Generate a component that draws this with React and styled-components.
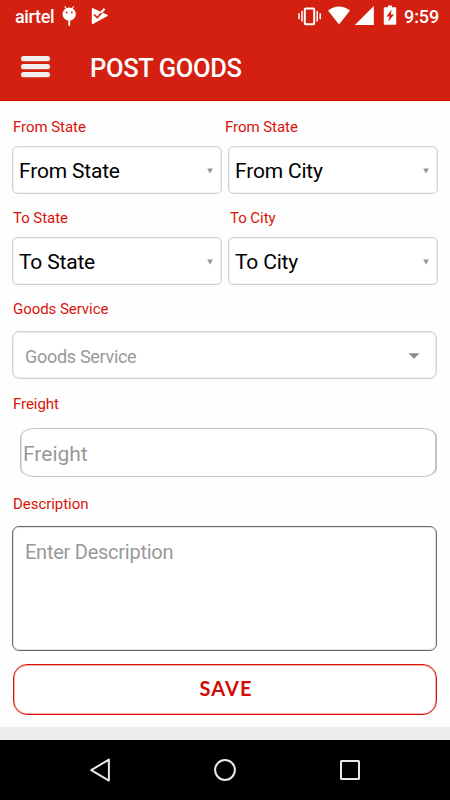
import React from 'react';
import styled, { createGlobalStyle, ThemeProvider } from 'styled-components';

const theme = {
    red: '#d32011',
    textRed: '#d8140a',
    grey: '#999999',
    line: '#d3d3d3',
};

const GlobalStyle = createGlobalStyle`
    * {
        box-sizing: border-box;
    }
    body {
        margin: 0;
        background-color: #fefefe;
        font-family: Roboto, "Liberation Sans", sans-serif;
    }
    svg {
        display: block;
    }
`;

const Screen = styled.div`
    width: 450px;
    height: 800px;
    display: flex;
    flex-direction: column;
    overflow: hidden;
    background-color: #fefefe;
`;

const StatusBar = styled.div`
    display: flex;
    justify-content: space-between;
    flex: none;
    height: 32px;
    padding: 0 10px 0 15px;
    background-color: ${props => props.theme.red};
    color: #fff;
`;

const StatusGroup = styled.div`
    display: flex;
    align-items: flex-start;
`;

const StatusText = styled.span`
    flex: none;
    width: ${props => props.$width};
    font-size: 18px;
    font-weight: 500;
    line-height: 33px;
    white-space: nowrap;
    letter-spacing: ${props => props.$spacing || '0'};
`;

const Toolbar = styled.header`
    display: flex;
    flex: none;
    align-items: center;
    height: 69px;
    padding: 0 21px;
    gap: 40px;
    background-color: ${props => props.theme.red};
    border-bottom: 1px solid #d60f05;
`;

const MenuButton = styled.button`
    display: flex;
    flex-direction: column;
    gap: 3px;
    width: 29px;
    padding: 0;
    border: none;
    background: none;
`;

const MenuBar = styled.span`
    height: 5px;
    border-radius: 2.5px;
    background-color: #f3efef;
    box-shadow: 0 1px 0 rgba(255, 190, 185, 0.3);
`;

const Title = styled.h1`
    margin: 0;
    padding-top: 3px;
    color: #fff;
    font-size: 25.5px;
    font-weight: 500;
    line-height: 30px;
    letter-spacing: -0.35px;
`;

const Form = styled.form`
    display: flex;
    flex-direction: column;
    flex: 1;
    padding: 16px 12px 0;
`;

const Row = styled.div`
    display: grid;
    grid-template-columns: 210px 210px;
    column-gap: 6px;
    margin-bottom: 14px;
`;

const Field = styled.div`
    display: flex;
    flex-direction: column;
    margin-bottom: ${props => props.$bottom || '0'};
`;

const Label = styled.label`
    height: 20px;
    margin-bottom: ${props => props.$bottom || '9px'};
    padding-left: 1px;
    color: ${props => props.theme.textRed};
    font-size: 15px;
    line-height: 20px;
    letter-spacing: -0.05px;
`;

// labels of the second column don't line up with their boxes
const ShiftedLabel = styled(Label)`
    padding-left: 0;
    margin-left: ${props => props.$shift};
`;

const Select = styled.div`
    display: flex;
    align-items: center;
    justify-content: space-between;
    height: 48px;
    padding: 2px 8px 0 6px;
    border: 1px solid ${props => props.theme.line};
    border-radius: 5px;
    background-color: #fff;
    box-shadow: inset 0 0 0 1px #f3f3f3;
    color: #000;
    font-size: 21px;
    letter-spacing: -0.18px;
`;

const WideSelect = styled(Select)`
    width: 425px;
    padding: 2px 16px 0 12px;
    border-radius: 7px;
    box-shadow: inset 0 0 0 1px #ececec;
    color: ${props => props.theme.grey};
    font-size: 18px;
    letter-spacing: -0.3px;
`;

const Input = styled.input`
    height: 49px;
    margin: 0 1px 0 8px;
    padding: 2px 0 0 2px;
    border: 1px solid #c4c4c4;
    border-width: 1px 2px 1px 1px;
    border-radius: 14px / 9px;
    background-color: #fff;
    box-shadow: inset 1px 0 0 #dcdcdc;
    font-family: inherit;
    font-size: 21px;
    outline: none;
    &::placeholder {
        color: ${props => props.theme.grey};
        opacity: 1;
    }
`;

const TextArea = styled.textarea`
    display: block;
    width: 425px;
    height: 125px;
    margin: 0;
    padding: 13px 12px;
    border: 1px solid #686868;
    border-radius: 7px;
    background-color: #fff;
    box-shadow: inset 0 0 0 1px #e2e2e2;
    font-family: inherit;
    font-size: 20px;
    line-height: 25px;
    letter-spacing: -0.25px;
    resize: none;
    outline: none;
    &::placeholder {
        color: ${props => props.theme.grey};
        opacity: 1;
    }
`;

const SaveButton = styled.button`
    width: 424px;
    height: 51px;
    margin: 0 0 0 1px;
    padding: 0 0 3px 2px;
    border: 1px solid #d8140a;
    border-radius: 14px;
    background-color: #fff;
    box-shadow: inset 0 0 0 1px #f3b0ab;
    color: #d00c06;
    font-family: Lato, "Open Sans", sans-serif;
    font-size: 20px;
    font-weight: 700;
    letter-spacing: 1.1px;
`;

const Strip = styled.div`
    flex: none;
    height: 13px;
    background-color: #ececec;
`;

const NavBar = styled.nav`
    display: flex;
    flex: none;
    justify-content: space-between;
    align-items: center;
    height: 60px;
    padding: 0 88px;
    background-color: #000;
`;

const Arrow = () => (
    <svg width="6" height="6" viewBox="0 0 6 6">
        <path d="M0.2 0.5h5.6L3 5.6z" fill="#949494" />
    </svg>
);

const WideArrow = () => (
    <svg width="12" height="6" viewBox="0 0 12 6">
        <path d="M0.5 0.3h11L6 5.8z" fill="#8b8b8b" />
    </svg>
);

const LeftStatusIcons = () => (
    <svg width="54" height="32" viewBox="58 0 54 32" fill="#fff">
        <path d="M64.6 6.3l2.2 3.2M73.8 6.3l-2.2 3.2" stroke="#fff" strokeWidth="1.1" />
        <circle cx="69.2" cy="14.2" r="6.6" />
        <rect x="68.3" y="20" width="1.9" height="6" rx="0.9" />
        <circle cx="66.6" cy="12.4" r="0.95" fill="#d32011" />
        <circle cx="71.8" cy="12.4" r="0.95" fill="#d32011" />
        <path d="M92.6 8q-.8 0-.8.9v14.2q0 1.3 1.2.8L107.5 16q.8-.6-.2-1.2z" />
        <path d="M94 14.5l3.2 3.1 8.6-8.8" fill="none" stroke="#d32011" strokeWidth="1.7" />
        <path d="M100.1 12.2l3.6-4.2 1.6 1.4-3.5 4z" />
    </svg>
);

const RightStatusIcons = () => (
    <svg width="107" height="32" viewBox="297 0 107 32" fill="#fff">
        <rect x="304.8" y="8.4" width="9.4" height="15.8" rx="1" fill="none" stroke="#fff" strokeWidth="2" />
        <path d="M302 11v10.5M317.2 11v10.5M299 13.2v6M320.2 13.2v6" stroke="#fff" strokeWidth="1.5" />
        <path d="M328 10.6Q339 2.4 350 10.6L339 24.6z" />
        <path d="M373.8 6v19h-19z" />
        <path d="M388 7.3V5.5h4v1.8h3.2q1 0 1 1v15.4q0 1-1 1h-10.4q-1 0-1-1V8.3q0-1 1-1z" />
        <path d="M391.8 9.6l-5.4 6.8h3.1l-1.2 5.3 5.7-7.2h-3.2z" fill="#d32011" />
    </svg>
);

const BackIcon = () => (
    <svg width="24" height="26" viewBox="88 757 24 26" fill="none" stroke="#e8e8e8" strokeWidth="2">
        <path d="M108.9 759.6v21L91.2 770.1z" strokeLinejoin="round" />
    </svg>
);

const HomeIcon = () => (
    <svg width="24" height="24" viewBox="213 758 24 24" fill="none" stroke="#e8e8e8" strokeWidth="2">
        <circle cx="225" cy="770" r="9.9" />
    </svg>
);

const RecentIcon = () => (
    <svg width="24" height="24" viewBox="338 758 24 24" fill="none" stroke="#e8e8e8" strokeWidth="2">
        <rect x="341" y="761" width="18" height="18" rx="0.5" />
    </svg>
);

const App = () => (
    <ThemeProvider theme={theme}>
        <GlobalStyle />
        <Screen>
            <StatusBar>
                <StatusGroup>
                    <StatusText $width="43px" $spacing="-0.35px">airtel</StatusText>
                    <LeftStatusIcons />
                </StatusGroup>
                <StatusGroup>
                    <RightStatusIcons />
                    <StatusText $width="36px" $spacing="-0.1px">9:59</StatusText>
                </StatusGroup>
            </StatusBar>
            <Toolbar>
                <MenuButton type="button" aria-label="Menu">
                    <MenuBar />
                    <MenuBar />
                    <MenuBar />
                </MenuButton>
                <Title>POST GOODS</Title>
            </Toolbar>
            <Form onSubmit={e => e.preventDefault()}>
                <Row>
                    <Field>
                        <Label>From State</Label>
                        <Select>From State<Arrow /></Select>
                    </Field>
                    <Field>
                        <ShiftedLabel $shift="-3px">From State</ShiftedLabel>
                        <Select>From City<Arrow /></Select>
                    </Field>
                </Row>
                <Row>
                    <Field>
                        <Label>To State</Label>
                        <Select>To State<Arrow /></Select>
                    </Field>
                    <Field>
                        <ShiftedLabel $shift="2px">To City</ShiftedLabel>
                        <Select>To City<Arrow /></Select>
                    </Field>
                </Row>
                <Field $bottom="15px">
                    <Label $bottom="12px">Goods Service</Label>
                    <WideSelect>Goods Service<WideArrow /></WideSelect>
                </Field>
                <Field $bottom="17px">
                    <Label $bottom="14px">Freight</Label>
                    <Input placeholder="Freight" />
                </Field>
                <Field $bottom="13px">
                    <Label $bottom="12px">Description</Label>
                    <TextArea placeholder="Enter Description" />
                </Field>
                <SaveButton type="submit">SAVE</SaveButton>
            </Form>
            <Strip />
            <NavBar>
                <BackIcon />
                <HomeIcon />
                <RecentIcon />
            </NavBar>
        </Screen>
    </ThemeProvider>
);

export default App;
